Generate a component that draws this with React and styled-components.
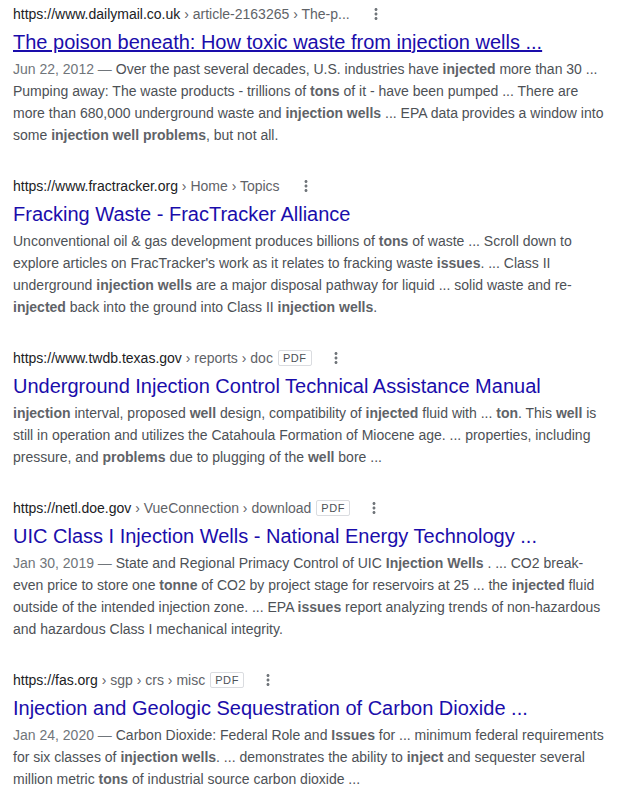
import React from "react";
import styled, { createGlobalStyle } from "styled-components";

const Global = createGlobalStyle`
  html, body { margin: 0; padding: 0; background: #fff; }
  body { font-family: "Liberation Sans", Arial, sans-serif; }
`;

const Page = styled.div`
  padding: 0 0 0 13px;
  width: 600px;
`;

const Result = styled.div`
  padding-top: 3px;
  margin-bottom: 26px;
`;

const UrlRow = styled.div`
  display: flex;
  align-items: center;
  height: 22px;
  font-size: 14px;
  line-height: 22px;
  white-space: nowrap;
`;

const Domain = styled.span`
  color: #202124;
`;

const Crumbs = styled.span`
  color: #5f6368;
`;

const Badge = styled.span`
  display: inline-flex;
  align-items: center;
  height: 14px;
  margin-left: 5px;
  padding: 0 4px;
  border: 1px solid #dadce0;
  border-radius: 2px;
  font-size: 11px;
  letter-spacing: 0.6px;
  color: #4d5156;
  line-height: 14px;
`;

const Menu = styled.span`
  display: inline-flex;
  width: 18px;
  height: 18px;
  margin-left: ${(p) => (p.$afterBadge ? "15px" : "17px")};
  color: #70757a;
`;

const Title = styled.h3`
  margin: 4px 0 0;
  font-size: 20px;
  font-weight: 400;
  line-height: 26px;
  color: #1a0dab;
  white-space: nowrap;
  text-decoration: ${(p) => (p.$hover ? "underline" : "none")};
`;

const Snippet = styled.div`
  margin-top: 3px;
  font-size: 14px;
  line-height: 22px;
  color: #4d5156;
`;

const DateText = styled.span`
  color: #70757a;
`;

const B = styled.b`
  font-weight: 700;
  color: #5f6368;
`;

const Kebab = ({ afterBadge }) => (
  <Menu $afterBadge={afterBadge}>
    <svg viewBox="0 0 24 24" width="18" height="18" fill="currentColor">
      <path d="M12 8c1.1 0 2-.9 2-2s-.9-2-2-2-2 .9-2 2 .9 2 2 2zm0 2c-1.1 0-2 .9-2 2s.9 2 2 2 2-.9 2-2-.9-2-2-2zm0 6c-1.1 0-2 .9-2 2s.9 2 2 2 2-.9 2-2-.9-2-2-2z" />
    </svg>
  </Menu>
);

const Url = ({ domain, crumbs, pdf }) => (
  <UrlRow>
    <span>
      <Domain>{domain}</Domain>
      <Crumbs>{crumbs}</Crumbs>
    </span>
    {pdf && <Badge>PDF</Badge>}
    <Kebab afterBadge={pdf} />
  </UrlRow>
);

export default function App() {
  return (
    <>
      <Global />
      <Page>
        <Result>
          <Url domain="https://www.dailymail.co.uk" crumbs=" › article-2163265 › The-p..." />
          <Title $hover>The poison beneath: How toxic waste from injection wells ...</Title>
          <Snippet>
            <DateText>Jun 22, 2012 — </DateText>Over the past several decades, U.S. industries have{" "}
            <B>injected</B> more than 30 ... Pumping away: The waste products - trillions of <B>tons</B> of it - have
            been pumped ... There are more than 680,000 underground waste and <B>injection wells</B> ... EPA data
            provides a window into some <B>injection well problems</B>, but not all.
          </Snippet>
        </Result>

        <Result>
          <Url domain="https://www.fractracker.org" crumbs=" › Home › Topics" />
          <Title>Fracking Waste - FracTracker Alliance</Title>
          <Snippet>
            Unconventional oil &amp; gas development produces billions of <B>tons</B> of waste ... Scroll down to
            explore articles on FracTracker's work as it relates to fracking waste <B>issues</B>. ... Class II
            underground <B>injection wells</B> are a major disposal pathway for liquid ... solid waste and re-
            <B>injected</B> back into the ground into Class II <B>injection wells</B>.
          </Snippet>
        </Result>

        <Result>
          <Url domain="https://www.twdb.texas.gov" crumbs=" › reports › doc" pdf />
          <Title>Underground Injection Control Technical Assistance Manual</Title>
          <Snippet>
            <B>injection</B> interval, proposed <B>well</B> design, compatibility of <B>injected</B> fluid with ...{" "}
            <B>ton</B>. This <B>well</B> is still in operation and utilizes the Catahoula Formation of Miocene age.
            ... properties, including pressure, and <B>problems</B> due to plugging of the <B>well</B> bore ...
          </Snippet>
        </Result>

        <Result>
          <Url domain="https://netl.doe.gov" crumbs=" › VueConnection › download" pdf />
          <Title>UIC Class I Injection Wells - National Energy Technology ...</Title>
          <Snippet>
            <DateText>Jan 30, 2019 — </DateText>State and Regional Primacy Control of UIC <B>Injection Wells</B> . ...
            CO2 break-even price to store one <B>tonne</B> of CO2 by project stage for reservoirs at 25 ... the{" "}
            <B>injected</B> fluid outside of the intended injection zone. ... EPA <B>issues</B> report analyzing
            trends of non-hazardous and hazardous Class I mechanical integrity.
          </Snippet>
        </Result>

        <Result>
          <Url domain="https://fas.org" crumbs=" › sgp › crs › misc" pdf />
          <Title>Injection and Geologic Sequestration of Carbon Dioxide ...</Title>
          <Snippet>
            <DateText>Jan 24, 2020 — </DateText>Carbon Dioxide: Federal Role and <B>Issues</B> for ... minimum
            federal requirements for six classes of <B>injection wells</B>. ... demonstrates the ability to{" "}
            <B>inject</B> and sequester several million metric <B>tons</B> of industrial source carbon dioxide ...
          </Snippet>
        </Result>
      </Page>
    </>
  );
}
